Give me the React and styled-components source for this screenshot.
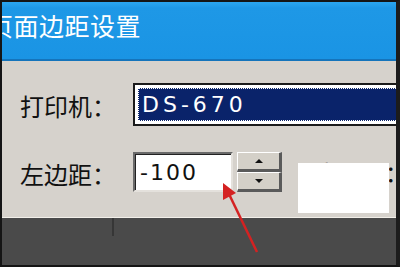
import React from "react";
import styled, { createGlobalStyle } from "styled-components";

const GlobalStyle = createGlobalStyle`
  html, body {
    margin: 0;
    padding: 0;
    background: #111;
  }
`;

const CJK = `"Noto Sans CJK SC", "Noto Sans", sans-serif`;

const Frame = styled.div`
  position: relative;
  width: 400px;
  height: 267px;
  box-sizing: border-box;
  border-left: 2px solid #151515;
  border-top: 2px solid #151515;
  border-right: 4px solid #1c1c1c;
  border-bottom: 2px solid #151515;
  display: flex;
  flex-direction: column;
  overflow: hidden;
  background: #d6d2cc;
`;

const TitleBar = styled.div`
  height: 57px;
  flex-shrink: 0;
  background: linear-gradient(#2ba6f0 0px, #1e98e6 6px, #1a94e4 100%);
  border-bottom: 2px solid #1574bb;
  overflow: hidden;
  display: flex;
  align-items: flex-start;
`;

const Title = styled.span`
  margin-left: -14px;
  margin-top: 5px;
  color: #fff;
  font-family: ${CJK};
  font-size: 25px;
  letter-spacing: 0.5px;
  white-space: nowrap;
`;

const Body = styled.div`
  position: relative;
  height: 157px;
  flex-shrink: 0;
  box-sizing: border-box;
  padding: 22px 0 0 18px;
  background: #d6d2cc;
  border-bottom: 1px solid #f2efe9;
  display: flex;
  flex-direction: column;
  gap: 26px;
`;

const Row = styled.div`
  display: flex;
  align-items: center;
  height: ${(p) => p.$h}px;
`;

const Label = styled.span`
  width: 113px;
  flex-shrink: 0;
  font-family: ${CJK};
  font-size: 24px;
  color: #111;
  white-space: nowrap;
  margin-top: 2px;
`;

const Combo = styled.div`
  width: 272px;
  height: 43px;
  flex-shrink: 0;
  box-sizing: border-box;
  border: 2px solid #1a1a1a;
  background: #fff;
  padding: 3px;
  display: flex;
`;

const Selected = styled.div`
  flex: 1;
  background: #0a236a;
  border: 1px dotted #fff;
  display: flex;
  align-items: center;
  padding-left: 3px;
  color: #fff;
  font-family: "DejaVu Sans", sans-serif;
  font-size: 22px;
  letter-spacing: 4px;
`;

const Input = styled.div`
  width: 100px;
  height: 40px;
  box-sizing: border-box;
  background: #fff;
  border-top: 2px solid #6a6a6a;
  border-left: 2px solid #6a6a6a;
  border-right: 2px solid #e4e1dc;
  border-bottom: 2px solid #e4e1dc;
  box-shadow: inset 1px 1px 0 #222;
  display: flex;
  align-items: center;
  padding-left: 5px;
  font-family: "DejaVu Sans", sans-serif;
  font-size: 22px;
  letter-spacing: 2px;
  color: #111;
`;

const Spinner = styled.div`
  margin-left: 4px;
  width: 45px;
  height: 40px;
  display: flex;
  flex-direction: column;
`;

const SpinButton = styled.div`
  flex: 1;
  box-sizing: border-box;
  background: #d4d0c8;
  border-top: 1px solid #fff;
  border-left: 1px solid #fff;
  border-right: 3px solid #5a5a5a;
  border-bottom: 3px solid #5a5a5a;
  display: flex;
  align-items: center;
  justify-content: center;
  &::after {
    content: "";
    border-left: 4px solid transparent;
    border-right: 4px solid transparent;
    ${(p) =>
      p.$down
        ? "border-top: 4px solid #111;"
        : "border-bottom: 4px solid #111;"}
  }
`;

const HiddenLabel = styled.span`
  position: absolute;
  left: 314px;
  top: 100px;
  font-family: ${CJK};
  font-size: 23px;
  line-height: 1;
  color: #111;
  white-space: nowrap;
`;

const Patch = styled.div`
  position: absolute;
  left: 296px;
  top: 102px;
  width: 91px;
  height: 50px;
  background: #fff;
`;

const Footer = styled.div`
  flex: 1;
  background: #4a4a4a;
  display: flex;
`;

const Seam = styled.div`
  margin-left: 110px;
  width: 2px;
  height: 18px;
  background: #363636;
`;

const Arrow = styled.svg`
  position: absolute;
  left: 0;
  top: 0;
  pointer-events: none;
`;

export default function App() {
  return (
    <>
      <GlobalStyle />
      <Frame>
        <TitleBar>
          <Title>页面边距设置</Title>
        </TitleBar>
        <Body>
          <Row $h={43}>
            <Label>打印机：</Label>
            <Combo>
              <Selected>DS-670</Selected>
            </Combo>
          </Row>
          <Row $h={40}>
            <Label>左边距：</Label>
            <Input>-100</Input>
            <Spinner>
              <SpinButton />
              <SpinButton $down />
            </Spinner>
          </Row>
          <HiddenLabel>上边距：</HiddenLabel>
          <Patch />
        </Body>
        <Footer>
          <Seam />
        </Footer>
        <Arrow width="400" height="267" viewBox="0 0 400 267">
          <line x1="255" y1="250" x2="226" y2="190" stroke="#d42222" strokeWidth="2.5" />
          <polygon points="221,181 221,198 234,191" fill="#d42222" />
        </Arrow>
      </Frame>
    </>
  );
}
